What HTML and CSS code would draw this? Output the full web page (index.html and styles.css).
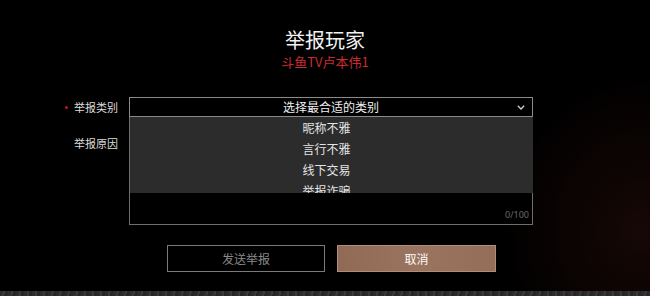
FILE: index.html
```html
<!DOCTYPE html>
<html lang="zh">
<head>
<meta charset="utf-8">
<title>举报玩家</title>
<link rel="stylesheet" href="styles.css">
</head>
<body>
<div class="page">
  <header class="head">
    <h1 class="title">举报玩家</h1>
    <div class="target">斗鱼TV卢本伟1</div>
  </header>
  <div class="form">
    <div class="row row-type">
      <div class="label"><span class="dot"></span>举报类别</div>
      <div class="select">
        <div class="select-box">
          <span class="select-text">选择最合适的类别</span>
          <svg class="chev" width="8" height="5" viewBox="0 0 8 5"><path d="M0.8 0.8 L4 4 L7.2 0.8" fill="none" stroke="#d0d0d0" stroke-width="1.3"/></svg>
        </div>
        <ul class="menu">
          <li>昵称不雅</li>
          <li>言行不雅</li>
          <li>线下交易</li>
          <li>举报诈骗</li>
        </ul>
      </div>
    </div>
    <div class="row row-reason">
      <div class="label">举报原因</div>
      <div class="textarea">
        <span class="count">0/100</span>
      </div>
    </div>
  </div>
  <div class="actions">
    <button class="btn btn-send">发送举报</button>
    <button class="btn btn-cancel">取消</button>
  </div>
  <div class="footer"></div>
</div>
</body>
</html>
```
FILE: styles.css
```css
* { box-sizing: border-box; }
html, body { margin: 0; padding: 0; background: #000; }
body { font-family: "Noto Sans CJK SC", "Noto Sans", sans-serif; }
.page {
  width: 650px;
  height: 296px;
  display: flex;
  flex-direction: column;
  padding-top: 28px;
  background:
    radial-gradient(ellipse 140px 160px at 640px 230px, rgba(40, 14, 10, 0.55), rgba(0,0,0,0) 100%),
    #000;
  overflow: hidden;
}
.head { text-align: center; }
.title {
  margin: 0;
  font-size: 20px;
  line-height: 24px;
  font-weight: 400;
  color: #f2f2f2;
}
.target {
  margin-top: 2px;
  font-size: 13px;
  line-height: 16px;
  color: #cc2a31;
}
.form { margin-top: 27px; display: flex; flex-direction: column; }
.row { display: flex; }
.label {
  width: 129px;
  padding-right: 11px;
  text-align: right;
  font-size: 11px;
  color: #dcdcdc;
  display: flex;
  justify-content: flex-end;
  align-items: center;
  gap: 6px;
}
.row-type .label { height: 20px; }
.row-reason .label { align-items: flex-start; padding-top: 18px; }
.dot { width: 3px; height: 3px; background: #c4122a; border-radius: 50%; }
.select { position: relative; width: 404px; }
.select-box {
  height: 20px;
  border: 1px solid #8a8a8a;
  background: #000;
  display: flex;
  align-items: center;
  justify-content: center;
  position: relative;
}
.select-text { font-size: 12px; color: #f0f0f0; line-height: 16px; }
.chev { position: absolute; right: 7px; top: 7px; }
.menu {
  position: absolute;
  left: 1px;
  right: 0;
  top: 20px;
  height: 76px;
  margin: 0;
  padding: 0 10px 0 0;
  list-style: none;
  overflow: hidden;
  background: #2c2c2c;
  z-index: 2;
}
.menu li {
  height: 21px;
  line-height: 21px;
  text-align: center;
  font-size: 12px;
  color: #e4e4e4;
}
.textarea {
  width: 404px;
  height: 108px;
  border: 1px solid #6e6e6e;
  border-top: none;
  background: #000;
  display: flex;
  align-items: flex-end;
  justify-content: flex-end;
  padding: 0 3px 3px 0;
}
.count {
  font-family: "Noto Sans", sans-serif;
  font-size: 9px;
  line-height: 12px;
  color: #6a6a6a;
}
.actions {
  margin-top: 20px;
  margin-left: 167px;
  display: flex;
  gap: 12px;
}
.btn {
  height: 27px;
  padding: 0;
  font-family: "Noto Sans CJK SC", sans-serif;
  font-size: 12px;
  cursor: pointer;
}
.btn-send {
  width: 158px;
  background: #000;
  border: 1px solid #7a7a7a;
  color: #8a8a8a;
}
.btn-cancel {
  width: 159px;
  background: linear-gradient(90deg, #906a55 0%, #9b745f 50%, #946e59 100%);
  border: 1px solid #b08d78;
  color: #fbfbfb;
}
.footer {
  margin-top: auto;
  height: 5px;
  background: repeating-linear-gradient(100deg, #2c2c2c 0 3px, #3a3a3a 3px 5px, #262626 5px 8px);
}
```
